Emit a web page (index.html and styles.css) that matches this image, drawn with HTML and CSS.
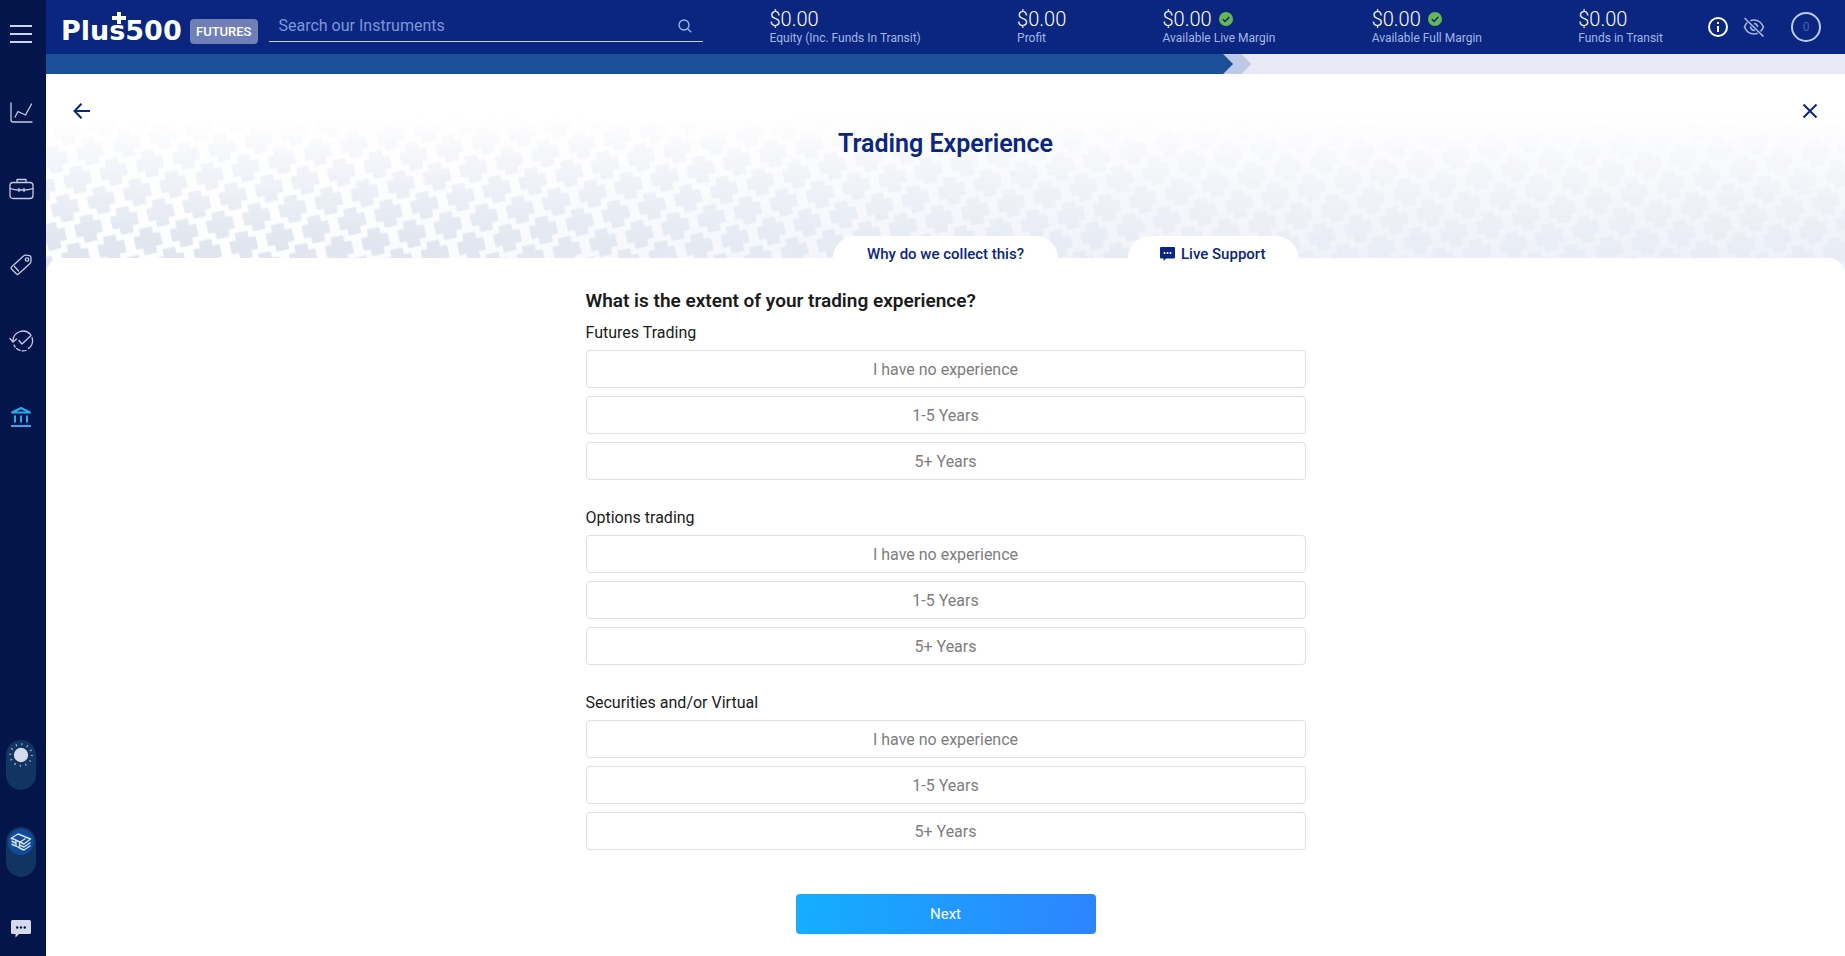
FILE: index.html
```html
<!DOCTYPE html>
<html lang="en">
<head>
<meta charset="utf-8">
<title>Trading Experience</title>
<meta name="viewport" content="width=device-width, initial-scale=1">
<link rel="stylesheet" href="styles.css">
</head>
<body>
<div class="app">
  <nav class="sidebar" aria-label="Main">
    <button class="side-btn menu-btn" aria-label="Menu">
      <svg width="22" height="18" viewBox="0 0 22 18" stroke="#c9d6f5" stroke-width="2"><path d="M0 1h22M0 9h22M0 17h22"/></svg>
    </button>
    <div class="side-links">
      <a class="side-btn" href="#" aria-label="Trade">
        <svg class="line" width="24" height="22" viewBox="0 0 24 22"><path d="M2 1v17q0 2 2 2h19"/><path d="M6 15l3-5.500l7.500 3.500l6-11"/></svg>
      </a>
      <a class="side-btn" href="#" aria-label="Positions">
        <svg class="line" width="26" height="24" viewBox="0 0 26 24"><rect x="2" y="5.500" width="23" height="16" rx="3"/><path d="M9 5.500V2.500h9v3M2 11.500q4.500 1.500 8.500 1.500M25 11.500q-4.500 1.500-8.500 1.500M12 13h3M11 11.500v3M16 11.500v3"/></svg>
      </a>
      <a class="side-btn" href="#" aria-label="Orders">
        <svg class="line" width="24" height="22" viewBox="0 0 24 22"><path d="M2.500 13L14.500 2q1-1 2.500-.8l3.500.5q1.500.3 1.500 1.800v3.500q0 1.500-1 2.500L9.500 20q-1 1-2 0l-5-5q-1-1 0-2z"/><circle cx="18" cy="5.500" r="1.700"/><path d="M5.500 12.500l4 4.500"/></svg>
      </a>
      <a class="side-btn" href="#" aria-label="History">
        <svg class="line" width="26" height="24" viewBox="0 0 26 24"><path d="M5 12a10 10 0 0 1 17.500-6.500"/><path d="M24 8.500a10 10 0 0 1-3.500 11"/><path d="M18 21.500a10 10 0 0 1-12-5.500" stroke-dasharray="4 2"/><path d="M2 9.500l3 3.500l3.500-3M11 11.500l3 3.500l9-8.500"/></svg>
      </a>
      <a class="side-btn" href="#" aria-label="Funds" aria-current="page">
        <svg width="22" height="22" viewBox="0 0 22 22" fill="none" stroke="#29a9f3" stroke-width="2"><path d="M1 20h20"/><path d="M5 9.500v7M11 9.500v7M17 9.500v7"/><path d="M2 6.500L11 2l9 4.500z" stroke-linejoin="round"/></svg>
      </a>
    </div>
    <div class="side-tools">
      <button class="toggle" aria-label="Light theme">
        <svg width="26" height="26" viewBox="0 0 26 26"><circle cx="13" cy="13" r="7.200" fill="#d3dbec"/><circle cx="13" cy="13" r="10.800" fill="none" stroke="#9fb3d0" stroke-width="2" stroke-dasharray="1.200 4.450"/></svg>
      </button>
      <button class="toggle toggle-mode" aria-label="Real money mode">
        <svg width="26" height="26" viewBox="0 0 26 26"><circle cx="13" cy="13" r="13" fill="#124a98"/><g fill="none" stroke="#d3e0f7" stroke-width="1.400" stroke-linejoin="round"><path d="M3.500 9L10 5l12.500 5l-6.500 5z"/><path d="M3.500 12l4 2M3.500 15l4 2M3.500 9v1.500M8 11.500V17l3.500 1.800V13.500l6-4M11.500 16l4.500 2l6.500-4.500M11.500 19l4.500 2l6.500-4.500"/></g></svg>
      </button>
    </div>
    <button class="side-btn chat-btn" aria-label="Chat">
      <svg width="20" height="18" viewBox="0 0 20 18"><path fill="#d5daea" d="M1.500 0h17q1.500 0 1.500 1.500v11q0 1.500-1.500 1.500H8l-3.500 3.500V14h-3Q0 14 0 12.500v-11Q0 0 1.500 0z"/><g fill="#04154b"><circle cx="6.200" cy="7.500" r="1.200"/><circle cx="10" cy="7.500" r="1.200"/><circle cx="13.800" cy="7.500" r="1.200"/></g></svg>
    </button>
  </nav>

  <div class="page">
    <header class="topbar">
      <a class="brand" href="#">
        <span class="brand-name">Plus500<svg class="brand-plus" width="14" height="12" viewBox="0 0 14 12" fill="#fff"><path d="M5 0h4v4h5v4H9v4H5V8H0V4h5z"/></svg></span>
        <span class="brand-tag">FUTURES</span>
      </a>
      <form class="search" role="search">
        <input type="search" placeholder="Search our Instruments" aria-label="Search our Instruments">
        <button type="button" class="search-btn" aria-label="Search">
          <svg width="14" height="14" viewBox="0 0 14 14" fill="none" stroke="#9fb9ee" stroke-width="1.300"><circle cx="6" cy="6" r="5"/><path d="M9.700 9.700l3.500 3.500"/></svg>
        </button>
      </form>
      <dl class="stats">
        <div class="stat"><dt>Equity (Inc. Funds In Transit)</dt><dd>$0.00</dd></div>
        <div class="stat"><dt>Profit</dt><dd>$0.00</dd></div>
        <div class="stat"><dt>Available Live Margin</dt><dd>$0.00 <svg width="14" height="14" viewBox="0 0 14 14"><circle cx="7" cy="7" r="7" fill="#67b750"/><path d="M3.800 7.200l2.300 2.200l4.200-4.400" fill="none" stroke="#0a2680" stroke-width="1.500"/></svg></dd></div>
        <div class="stat"><dt>Available Full Margin</dt><dd>$0.00 <svg width="14" height="14" viewBox="0 0 14 14"><circle cx="7" cy="7" r="7" fill="#67b750"/><path d="M3.800 7.200l2.300 2.200l4.200-4.400" fill="none" stroke="#0a2680" stroke-width="1.500"/></svg></dd></div>
        <div class="stat"><dt>Funds in Transit</dt><dd>$0.00</dd></div>
      </dl>
      <div class="top-actions">
        <button class="icon-btn" aria-label="Information">
          <svg width="20" height="20" viewBox="0 0 20 20" fill="none" stroke="#fff" stroke-width="2"><circle cx="10" cy="10" r="9"/><path d="M10 9v6M10 5v2"/></svg>
        </button>
        <button class="icon-btn" aria-label="Hide balances">
          <svg width="22" height="20" viewBox="0 0 22 20" fill="none" stroke="#a3b3e0" stroke-width="1.700"><path d="M1.500 1L20.500 19.500"/><path d="M7.500 3.800Q9 3 11 3q6.500 0 9.500 7q-1 2.500-3 4.300M4.300 5.500Q2.500 7.200 1.500 10q3 7 9.500 7q2 0 3.700-.7"/><path d="M11 6.500a3.500 3.500 0 0 1 3.500 3.500M7.600 9.300a3.500 3.500 0 0 0 4.300 4"/></svg>
        </button>
        <button class="timer" aria-label="Notifications">0</button>
      </div>
    </header>

    <div class="progress" role="progressbar" aria-label="Registration" aria-valuenow="66" aria-valuemin="0" aria-valuemax="100">
      <div class="progress-done" style="width:66%"></div>
      <div class="progress-next"></div>
    </div>

    <main class="main">
      <section class="hero">
        <svg class="hero-pattern" width="100%" height="100%" aria-hidden="true">
          <defs>
            <path id="cross" d="M-5.500 -12.500h11v7h7v11h-7v7h-11v-7h-7v-11h7z" fill="#e0e5ef" stroke="#e0e5ef" stroke-width="2" stroke-linejoin="round"/>
            <pattern id="crosses" width="37" height="50" patternUnits="userSpaceOnUse" patternTransform="translate(19 134) rotate(-12.500)">
              <use href="#cross"/>
              <use href="#cross" x="37"/>
              <use href="#cross" y="50"/>
              <use href="#cross" x="37" y="50"/>
              <use href="#cross" x="18.500" y="25"/>
            </pattern>
          </defs>
          <rect width="100%" height="100%" fill="url(#crosses)"/>
        </svg>
        <div class="hero-bar">
          <button class="icon-btn" aria-label="Back">
            <svg width="18" height="16" viewBox="0 0 18 16" fill="none" stroke="#0a2680" stroke-width="2"><path d="M17 8H2M8.500 .7L1.500 8l7 7.300"/></svg>
          </button>
          <button class="icon-btn" aria-label="Close">
            <svg width="16" height="16" viewBox="0 0 16 16" fill="none" stroke="#0a2680" stroke-width="2"><path d="M1.500 1.500l13 13M14.500 1.500l-13 13"/></svg>
          </button>
        </div>
        <h1 class="hero-title">Trading Experience</h1>
      </section>

      <section class="panel">
        <div class="column">
          <div class="tabs">
            <button class="tab tab-why">Why do we collect this?</button>
            <button class="tab tab-support">
              <svg width="15" height="14" viewBox="0 0 15 14"><path fill="#0a2680" d="M1 0h13q1 0 1 1v9.500q0 1-1 1H6L3.500 14v-2.500H1q-1 0-1-1V1q0-1 1-1z"/><g fill="#fff"><circle cx="4.500" cy="6" r="1"/><circle cx="7.500" cy="6" r="1"/><circle cx="10.500" cy="6" r="1"/></g></svg>
              Live Support
            </button>
          </div>
          <h2 class="question">What is the extent of your trading experience?</h2>
          <div class="groups">
            <fieldset class="group">
              <legend>Futures Trading</legend>
              <button class="option">I have no experience</button>
              <button class="option">1-5 Years</button>
              <button class="option">5+ Years</button>
            </fieldset>
            <fieldset class="group">
              <legend>Options trading</legend>
              <button class="option">I have no experience</button>
              <button class="option">1-5 Years</button>
              <button class="option">5+ Years</button>
            </fieldset>
            <fieldset class="group">
              <legend>Securities and/or Virtual</legend>
              <button class="option">I have no experience</button>
              <button class="option">1-5 Years</button>
              <button class="option">5+ Years</button>
            </fieldset>
          </div>
          <button class="next">Next</button>
        </div>
      </section>
    </main>
  </div>
</div>
</body>
</html>
```
FILE: styles.css
```css
* {
  box-sizing: border-box;
}

body {
  margin: 0;
  font-family: Roboto, "Liberation Sans", sans-serif;
  font-size: 16px;
  color: #1b1b1b;
  background: #fff;
}

button,
input {
  font: inherit;
  color: inherit;
  border: 0;
  padding: 0;
  background: none;
}

button {
  cursor: pointer;
}

svg {
  display: block;
}

.app {
  display: flex;
  min-height: 100vh;
}

/* Sidebar */
.sidebar {
  flex: none;
  width: 46px;
  padding: 0 4px 18px 0;
  display: flex;
  flex-direction: column;
  align-items: center;
  background: #04154b;
}

.side-btn {
  display: grid;
  place-items: center;
}

.menu-btn {
  height: 68px;
}

.side-links {
  display: flex;
  flex-direction: column;
  gap: 52px;
  padding-top: 33px;
}

.side-links .side-btn {
  height: 24px;
}

.line {
  fill: none;
  stroke: #c3cbe2;
  stroke-width: 1.3;
  stroke-linecap: round;
  stroke-linejoin: round;
}

.side-tools {
  margin-top: auto;
  display: flex;
  flex-direction: column;
  gap: 37px;
}

.toggle {
  width: 30px;
  height: 50px;
  padding: 2px;
  display: flex;
  align-items: flex-start;
  border-radius: 15px;
  background: #123463;
}

.chat-btn {
  margin-top: 43px;
}

/* Top bar */
.page {
  flex: 1;
  min-width: 0;
  display: flex;
  flex-direction: column;
}

.topbar {
  height: 54px;
  padding: 0 24px 0 15px;
  display: flex;
  align-items: flex-start;
  background: #0a2680;
  color: #fff;
}

.brand {
  display: flex;
  align-items: flex-start;
  gap: 8px;
  padding-top: 19px;
  color: #fff;
  text-decoration: none;
}

.brand-name {
  position: relative;
  width: 121px;
  font: 700 27px/24px "DejaVu Sans", Roboto, sans-serif;
}

.brand-plus {
  position: absolute;
  top: -7px;
  left: 51px;
}

.brand-tag {
  padding: 0 6px;
  border-radius: 4px;
  background: #707fb5;
  font-size: 13px;
  font-weight: 500;
  line-height: 25px;
}

.search {
  flex: none;
  width: 434px;
  height: 42px;
  margin-left: 11px;
  padding: 10px 11px 0 10px;
  display: flex;
  align-items: center;
  border-bottom: 1px solid #c3d4f7;
}

.search input {
  flex: 1;
  min-width: 0;
  outline: none;
}

.search input::placeholder {
  color: #7d97d6;
  opacity: 1;
}

.stats {
  flex: 1;
  margin: 0 45px 0 67px;
  padding-top: 7px;
  display: flex;
  justify-content: space-between;
}

.stat {
  display: flex;
  flex-direction: column-reverse;
  white-space: nowrap;
}

.stat dt {
  font-size: 12px;
  line-height: 14px;
  color: #a3b6e6;
}

.stat dd {
  margin: 0;
  display: flex;
  align-items: center;
  gap: 7px;
  font-size: 20px;
  font-weight: 300;
  line-height: 24px;
}

.top-actions {
  display: flex;
  align-items: center;
  padding-top: 12px;
}

.top-actions .icon-btn + .icon-btn {
  margin-left: 15px;
}

.timer {
  width: 30px;
  height: 30px;
  margin-left: 26px;
  border: 2px solid #b9cbf5;
  border-radius: 50%;
  font-size: 12px;
  color: #4560ad;
}

/* Progress */
.progress {
  height: 20px;
  display: flex;
  background: #e7e9f4;
}

.progress-done {
  flex: none;
  background: #1b4f97;
  clip-path: polygon(0 0, calc(100% - 10px) 0, 100% 50%, calc(100% - 10px) 100%, 0 100%);
}

.progress-next {
  width: 28px;
  margin-left: -10px;
  background: #bec9e8;
  clip-path: polygon(0 0, 18px 0, 100% 50%, 18px 100%, 0 100%, 10px 50%);
}

/* Hero */
.main {
  flex: 1;
  display: flex;
  flex-direction: column;
}

.hero {
  position: relative;
  height: 200px;
  background: linear-gradient(#fff 20%, transparent 95%), linear-gradient(90deg, #fdfeff 10%, #f0f2f9 55%, #edf0f7);
}

.hero-pattern {
  position: absolute;
  inset: 0;
  mask-image: linear-gradient(transparent 22%, #000 85%), linear-gradient(90deg, #000 20%, rgba(0, 0, 0, 0.4) 70%);
  mask-composite: intersect;
}

.hero-bar {
  position: relative;
  display: flex;
  justify-content: space-between;
  padding: 29px 27px 0;
}

.hero-title {
  position: relative;
  margin: 10px 0 0;
  font-size: 25px;
  font-weight: 600;
  line-height: 30px;
  text-align: center;
  color: #0a2680;
}

/* Form panel */
.panel {
  position: relative;
  flex: 1;
  margin-top: -16px;
  border-radius: 16px 16px 0 0;
  background: #fff;
}

.column {
  max-width: 720px;
  margin: 0 auto;
  display: flex;
  flex-direction: column;
}

.tabs {
  display: grid;
  grid-template-columns: 1fr auto 1fr;
  margin-top: -22px;
  padding-right: 8px;
  padding-left: 8px;
}

.tab {
  height: 36px;
  display: flex;
  align-items: center;
  justify-content: center;
  gap: 6px;
  border-radius: 22px 22px 0 0;
  background: #fff;
  font-size: 15px;
  font-weight: 500;
  color: #0a2680;
}

.tab-why {
  grid-column: 2;
  padding: 0 34px;
}

.tab-support {
  justify-self: end;
  padding: 0 32px;
}

.question {
  margin: 17px 0 0;
  font-size: 19px;
  font-weight: 600;
  line-height: 24px;
}

.groups {
  display: flex;
  flex-direction: column;
  gap: 27px;
  margin-top: 10px;
}

.group {
  margin: 0;
  padding: 0;
  border: 0;
  min-width: 0;
  display: flex;
  flex-direction: column;
  gap: 8px;
}

.group legend {
  padding: 0;
  margin-bottom: 7px;
  line-height: 20px;
}

.group + .group {
  margin-top: 1px;
}

.option {
  height: 38px;
  border: 1px solid #e0e0e2;
  border-radius: 4px;
  color: #7d7d7d;
}

.next {
  align-self: center;
  width: 300px;
  height: 40px;
  margin: 44px 0 22px;
  border-radius: 4px;
  background: linear-gradient(100deg, #14aeff, #2d84ff);
  font-size: 15px;
  color: #fff;
}
```
